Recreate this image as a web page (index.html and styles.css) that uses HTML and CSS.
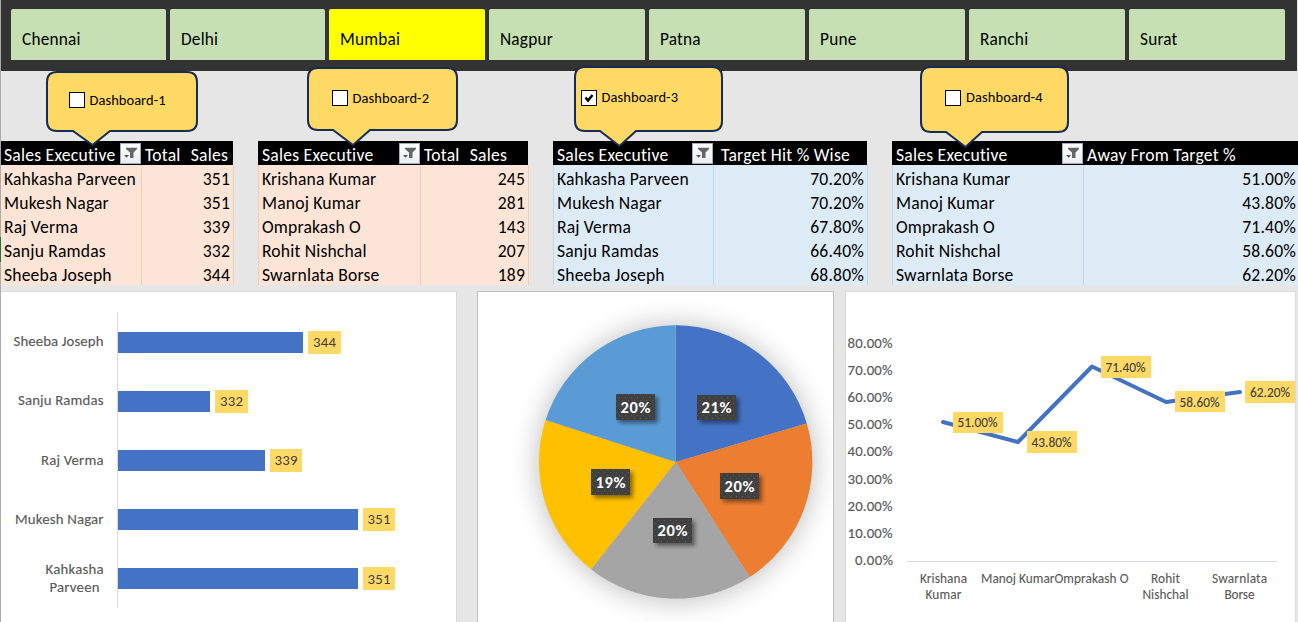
FILE: index.html
```html
<!DOCTYPE html>
<html lang="en">
<head>
<meta charset="utf-8">
<title>Sales dashboard</title>
<link rel="stylesheet" href="styles.css">
</head>
<body>
<svg class="defs" width="0" height="0">
  <defs>
    <linearGradient id="btn" x1="0" y1="0" x2="0" y2="1"><stop offset="0" stop-color="#fff"/><stop offset="1" stop-color="#e9edf2"/></linearGradient>
    <symbol id="filter" viewBox="0 0 21 21">
      <rect x="0.5" y="0.5" width="20" height="20" fill="url(#btn)" stroke="#a3adb8"/>
      <path d="M6 4.700H17V6L13.500 9.500V15H10V9.500L6 6Z" fill="#666"/>
      <path d="M4 12H9L6.500 14.700Z" fill="#555"/>
    </symbol>
  </defs>
</svg>
<main class="sheet">
  <nav class="slicer">
    <div class="city narrow">Chennai</div><div class="city narrow">Delhi</div><div class="city active">Mumbai</div><div class="city">Nagpur</div><div class="city">Patna</div><div class="city">Pune</div><div class="city">Ranchi</div><div class="city">Surat</div>
  </nav>

  <section class="tables">
    <div class="table peach t1">
      <div class="row head"><span>Sales Executive<svg class="filter"><use href="#filter"/></svg></span><span>Total&nbsp; Sales</span></div>
      <div class="row"><span>Kahkasha Parveen</span><span>351</span></div>
      <div class="row"><span>Mukesh Nagar</span><span>351</span></div>
      <div class="row"><span>Raj Verma</span><span>339</span></div>
      <div class="row"><span>Sanju Ramdas</span><span>332</span></div>
      <div class="row"><span>Sheeba Joseph</span><span>344</span></div>
    </div>
    <div class="table peach t2">
      <div class="row head"><span>Sales Executive<svg class="filter"><use href="#filter"/></svg></span><span>Total&nbsp; Sales</span></div>
      <div class="row"><span>Krishana Kumar</span><span>245</span></div>
      <div class="row"><span>Manoj Kumar</span><span>281</span></div>
      <div class="row"><span>Omprakash O</span><span>143</span></div>
      <div class="row"><span>Rohit Nishchal</span><span>207</span></div>
      <div class="row"><span>Swarnlata Borse</span><span>189</span></div>
    </div>
    <div class="table blue t3">
      <div class="row head"><span>Sales Executive<svg class="filter"><use href="#filter"/></svg></span><span>Target Hit % Wise</span></div>
      <div class="row"><span>Kahkasha Parveen</span><span>70.20%</span></div>
      <div class="row"><span>Mukesh Nagar</span><span>70.20%</span></div>
      <div class="row"><span>Raj Verma</span><span>67.80%</span></div>
      <div class="row"><span>Sanju Ramdas</span><span>66.40%</span></div>
      <div class="row"><span>Sheeba Joseph</span><span>68.80%</span></div>
    </div>
    <div class="table blue t4">
      <div class="row head"><span>Sales Executive<svg class="filter"><use href="#filter"/></svg></span><span>Away From Target %</span></div>
      <div class="row"><span>Krishana Kumar</span><span>51.00%</span></div>
      <div class="row"><span>Manoj Kumar</span><span>43.80%</span></div>
      <div class="row"><span>Omprakash O</span><span>71.40%</span></div>
      <div class="row"><span>Rohit Nishchal</span><span>58.60%</span></div>
      <div class="row"><span>Swarnlata Borse</span><span>62.20%</span></div>
    </div>
  </section>

  <section class="charts">
    <svg class="chart bars" viewBox="1 292 455 331">
      <path d="M117.5 312V608" stroke="#d9d9d9"/>
      <g fill="#4472c4">
        <rect x="118" y="332" width="185" height="21"/><rect x="118" y="391" width="92" height="21"/><rect x="118" y="450" width="147" height="21"/><rect x="118" y="509" width="240" height="21"/><rect x="118" y="568" width="240" height="21"/>
      </g>
      <g fill="#ffd966">
        <rect x="308" y="331" width="33" height="23"/><rect x="215" y="390" width="33" height="23"/><rect x="270" y="449" width="32" height="23"/><rect x="363" y="508" width="32" height="23"/><rect x="363" y="567" width="32" height="23"/>
      </g>
      <g class="value">
        <text x="313" y="347" textLength="23">344</text><text x="220" y="406" textLength="23">332</text><text x="274.5" y="465" textLength="23">339</text><text x="367.5" y="524" textLength="23">351</text><text x="367.5" y="584" textLength="23">351</text>
      </g>
      <g class="axis">
        <text x="13.5" y="346" textLength="90">Sheeba Joseph</text><text x="18" y="405" textLength="85.5">Sanju Ramdas</text><text x="41" y="465" textLength="62.5">Raj Verma</text><text x="15" y="524" textLength="88.5">Mukesh Nagar</text><text x="45.5" y="574" textLength="58">Kahkasha</text><text x="49.5" y="592" textLength="50">Parveen</text>
      </g>
    </svg>

    <svg class="chart pie" viewBox="478 292 355 331">
      <defs>
        <filter id="halo" x="-30%" y="-30%" width="160%" height="160%"><feGaussianBlur stdDeviation="14"/></filter>
        <filter id="drop" x="-30%" y="-30%" width="180%" height="200%"><feDropShadow dx="3" dy="3" stdDeviation="2" flood-opacity=".45"/></filter>
        <pattern id="dots" width="6" height="6" patternUnits="userSpaceOnUse"><rect width="6" height="6" fill="#404040"/><rect x="1" y="1" width="1" height="1" fill="#5c5c5c"/><rect x="4" y="4" width="1" height="1" fill="#5c5c5c"/></pattern>
      </defs>
      <circle cx="675.7" cy="463" r="138" fill="#000" opacity=".25" filter="url(#halo)"/>
      <g transform="translate(675.7 462)">
        <path d="M0 0V-136.7A136.7 136.7 0 0 1 131.1 -38.6Z" fill="#4472c4"/>
        <path d="M0 0L131.1 -38.6A136.7 136.7 0 0 1 74.1 114.9Z" fill="#ed7d31"/>
        <path d="M0 0L74.1 114.9A136.7 136.7 0 0 1 -84.7 107.3Z" fill="#a5a5a5"/>
        <path d="M0 0L-84.7 107.3A136.7 136.7 0 0 1 -130.1 -42Z" fill="#ffc000"/>
        <path d="M0 0L-130.1 -42A136.7 136.7 0 0 1 0 -136.7Z" fill="#5b9bd5"/>
      </g>
      <g fill="url(#dots)">
        <rect x="697" y="395" width="39" height="25" filter="url(#drop)"/><rect x="720" y="473" width="39" height="26" filter="url(#drop)"/><rect x="653" y="518" width="39" height="25" filter="url(#drop)"/><rect x="591" y="469" width="39" height="26" filter="url(#drop)"/><rect x="616" y="394" width="39" height="26" filter="url(#drop)"/>
      </g>
      <g class="share">
        <text x="701.5" y="413" textLength="30">21%</text><text x="724.5" y="492" textLength="30">20%</text><text x="657.5" y="536" textLength="30">20%</text><text x="595.5" y="488" textLength="30">19%</text><text x="620.5" y="413" textLength="30">20%</text>
      </g>
    </svg>

    <svg class="chart line" viewBox="846 292 449 331">
      <path d="M907 561.5H1277" stroke="#d9d9d9"/>
      <polyline points="943,422 1018,442 1092,366.5 1166,402 1240,392" fill="none" stroke="#4472c4" stroke-width="4" stroke-linecap="round" stroke-linejoin="round"/>
      <g fill="#ffd966">
        <rect x="953" y="412" width="50" height="21"/><rect x="1027" y="431" width="50" height="22"/><rect x="1101" y="356" width="50" height="22"/><rect x="1175" y="391" width="50" height="21"/><rect x="1245" y="381" width="50" height="22"/>
      </g>
      <g class="point">
        <text x="957.5" y="427" textLength="40">51.00%</text><text x="1031.5" y="447" textLength="40">43.80%</text><text x="1105.5" y="372" textLength="40">71.40%</text><text x="1179.5" y="407" textLength="40">58.60%</text><text x="1250" y="397" textLength="40">62.20%</text>
      </g>
      <g class="axis">
        <text x="847.5" y="348" textLength="45">80.00%</text><text x="847.5" y="375" textLength="45">70.00%</text><text x="847.5" y="402" textLength="45">60.00%</text><text x="847.5" y="429" textLength="45">50.00%</text><text x="847.5" y="456" textLength="45">40.00%</text><text x="847.5" y="484" textLength="45">30.00%</text><text x="847.5" y="511" textLength="45">20.00%</text><text x="847.5" y="538" textLength="45">10.00%</text><text x="855" y="565" textLength="38">0.00%</text>
      </g>
      <g class="names">
        <text x="920" y="583" textLength="47">Krishana</text><text x="925.5" y="599" textLength="36">Kumar</text><text x="981" y="583" textLength="73.500">Manoj Kumar</text><text x="1054.5" y="583" textLength="74">Omprakash O</text><text x="1151" y="583" textLength="29">Rohit</text><text x="1142.5" y="599" textLength="46">Nishchal</text><text x="1212" y="583" textLength="55">Swarnlata</text><text x="1224.5" y="599" textLength="30">Borse</text>
      </g>
    </svg>
  </section>

  <svg class="callouts" viewBox="0 60 1298 92">
    <g fill="#ffd966" stroke="#172c51" stroke-width="2">
      <path d="M57 72H187Q197 72 197 82V121Q197 131 187 131H110L92.500 145L73 131H57Q47 131 47 121V82Q47 72 57 72Z"/>
      <path d="M318 68H447Q457 68 457 78V120Q457 130 447 130H370L353 145L333 130H318Q308 130 308 120V78Q308 68 318 68Z"/>
      <path d="M585 67H712Q722 67 722 77V121Q722 131 712 131H636L619.500 146L600 131H585Q575 131 575 121V77Q575 67 585 67Z"/>
      <path d="M931 67H1058Q1068 67 1068 77V122Q1068 132 1058 132H982L965.500 147L946 132H931Q921 132 921 122V77Q921 67 931 67Z"/>
    </g>
    <g fill="#fff" stroke="#000">
      <rect x="69.500" y="92.500" width="15" height="15"/><rect x="332.500" y="90.500" width="15" height="15"/><rect x="581.500" y="90.500" width="15" height="15"/><rect x="945.500" y="90.500" width="15" height="15"/>
    </g>
    <path d="M585.500 97.500L588 100.500L592.500 95" fill="none" stroke="#000" stroke-width="2.500"/>
    <g class="check">
      <text x="89.500" y="105" textLength="76">Dashboard-1</text><text x="352.500" y="103" textLength="76.500">Dashboard-2</text><text x="601.500" y="102" textLength="76.500">Dashboard-3</text><text x="966" y="102" textLength="76.500">Dashboard-4</text>
    </g>
  </svg>
  <i class="row-marker"></i>
</main>
</body>
</html>
```
FILE: styles.css
```css
* { box-sizing: border-box; }
body { margin: 0; background: #e6e6e6; font-family: Carlito, Calibri, Lato, sans-serif; overflow: hidden; }
.defs { position: absolute; }
.sheet { position: relative; width: 1298px; height: 622px; border-left: 1px solid #ababab; }

.slicer { display: flex; gap: 4px; width: 1296px; height: 71px; padding: 9px 0 11px 10px; background: #333; }
.city { width: 156px; padding: 19px 0 0 11px; border-radius: 2px 2px 0 0; background: #c6e0b4; font-size: 17.3px; line-height: 24px; letter-spacing: 0.2px; color: #000; }
.city.narrow { width: 155px; }
.city.active { background: #ff0; }

.tables { display: flex; gap: 24px; margin-top: 70px; }
.table { flex: none; font-size: 17.6px; line-height: 26px; letter-spacing: 0.17px; white-space: nowrap; color: #000; }
.row { display: grid; height: 24px; }
.t1 { width: 233px; }
.t1 .row { grid-template-columns: 141px 1fr; }
.t2 { width: 271px; }
.t2 .row { grid-template-columns: 163px 1fr; }
.t3 { width: 315px; }
.t3 .row { grid-template-columns: 161px 1fr; }
.t4 { width: 406px; }
.t4 .row { grid-template-columns: 192px 1fr; }
.row span { padding: 1px 3px 0 4px; height: 24px; border-right: 1px solid; }
.row span:first-child { border-left: 1px solid; padding-left: 3px; }
.t1 .row span:first-child { border-left: 0; }
.t4 .row span:last-child { border-right: 0; padding-right: 2px; }
.row span:last-child { text-align: right; }
.peach span { background: #fce4d6; border-color: #f8cbad !important; }
.blue span { background: #ddebf7; border-color: #bdd7ee !important; }
.head { background: #000; margin-right: 1px; color: #fff; letter-spacing: 0.24px; }
.t4 .head { margin-right: 0; }
.row.head span { display: flex; justify-content: space-between; background: #000; border: 0; padding: 1px 0 0 3px; }
.row.head span:first-child { padding-left: 4px; }
.t1 .row.head span:first-child { padding-left: 3px; }
.t3 .row.head span:last-child { padding-left: 7px; }
.peach .row.head span:last-child { word-spacing: 0.8px; }
.filter { width: 21px; height: 21px; margin: 1px 1px 0 0; flex: none; }

.charts { display: flex; margin-top: 6px; }
.chart { flex: none; height: 332px; background: #fff; border-top: 1px solid #d9d9d9; border-right: 1px solid #d9d9d9; }
.bars { width: 456px; }
.pie { width: 357px; margin-left: 20px; border: 1px solid #bfbfbf; border-bottom: 0; }
.line { width: 451px; margin-left: 11px; border-left: 1px solid #d9d9d9; }
.value { font-size: 14.8px; fill: #404040; }
.axis { font-size: 14.8px; fill: #595959; stroke: #595959; stroke-width: 0.15px; }
.names, .point { font-size: 13.3px; fill: #595959; stroke: #595959; stroke-width: 0.1px; }
.point { fill: #404040; stroke: #404040; }
.share { font-size: 16.5px; font-weight: 700; fill: #fff; }

.callouts { position: absolute; left: -1px; top: 60px; width: 1298px; height: 92px; }
.check { font-size: 14.5px; fill: #000; }
/* Active-row indicator on the sheet's left edge */
.row-marker { position: absolute; left: -1px; top: 237px; width: 1px; height: 25px; background: #217346; }
```
